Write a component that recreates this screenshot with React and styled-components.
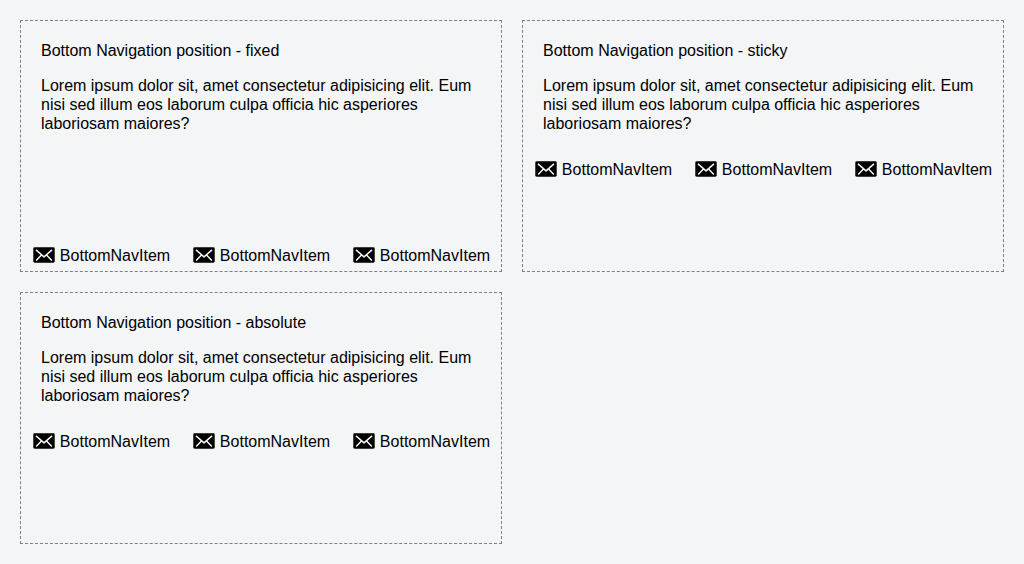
import React from 'react';
import styled, { createGlobalStyle } from 'styled-components';

const GlobalStyle = createGlobalStyle`
  *, *::before, *::after { box-sizing: border-box; }
  body {
    margin: 0;
    background: #f4f5f7;
    color: #000;
    font-family: "Liberation Sans", Arial, sans-serif;
    font-size: 16px;
    line-height: 19px;
  }
`;

const Page = styled.main`
  display: grid;
  grid-template-columns: repeat(2, minmax(0, 1fr));
  gap: 20px;
  padding: 20px;
`;

const Card = styled.section`
  display: flex;
  flex-direction: column;
  min-height: 252px;
  border: 1px dashed #808080;
`;

const Content = styled.div`
  display: flex;
  flex-direction: column;
  gap: 16px;
  padding: 20px;
`;

const Text = styled.p`
  margin: 0;
`;

const BottomNav = styled.nav`
  display: flex;
  margin-top: ${({ $pinned }) => ($pinned ? 'auto' : '0')};
`;

const NavButton = styled.button`
  display: flex;
  flex: 1;
  align-items: center;
  justify-content: center;
  gap: 4px;
  height: 32px;
  padding: 0;
  border: 0;
  background: transparent;
  color: inherit;
  font: inherit;
  cursor: pointer;
`;

const Icon = styled.svg`
  flex: none;
  width: 24px;
  height: 24px;
`;

function MailIcon() {
  return (
    <Icon viewBox="0 0 24 24" aria-hidden="true">
      <rect x="1.3" y="4.3" width="21.4" height="15.4" rx="1.4" fill="#000" />
      <path
        d="M4 6.9 12 13.9 20 6.9M4.2 17.4 9.2 12.2M19.8 17.4 14.8 12.2"
        fill="none"
        stroke="#f4f5f7"
        strokeWidth="1.5"
        strokeLinejoin="round"
      />
    </Icon>
  );
}

const items = ['first', 'second', 'third'];

function Example({ position, pinned }) {
  return (
    <Card>
      <Content>
        <Text>Bottom Navigation position - {position}</Text>
        <Text>
          Lorem ipsum dolor sit, amet consectetur adipisicing elit. Eum nisi sed
          illum eos laborum culpa officia hic asperiores laboriosam maiores?
        </Text>
      </Content>
      <BottomNav $pinned={pinned}>
        {items.map((item) => (
          <NavButton key={item} type="button">
            <MailIcon />
            BottomNavItem
          </NavButton>
        ))}
      </BottomNav>
    </Card>
  );
}

export default function App() {
  return (
    <>
      <GlobalStyle />
      <Page>
        <Example position="fixed" pinned />
        <Example position="sticky" />
        <Example position="absolute" />
      </Page>
    </>
  );
}
